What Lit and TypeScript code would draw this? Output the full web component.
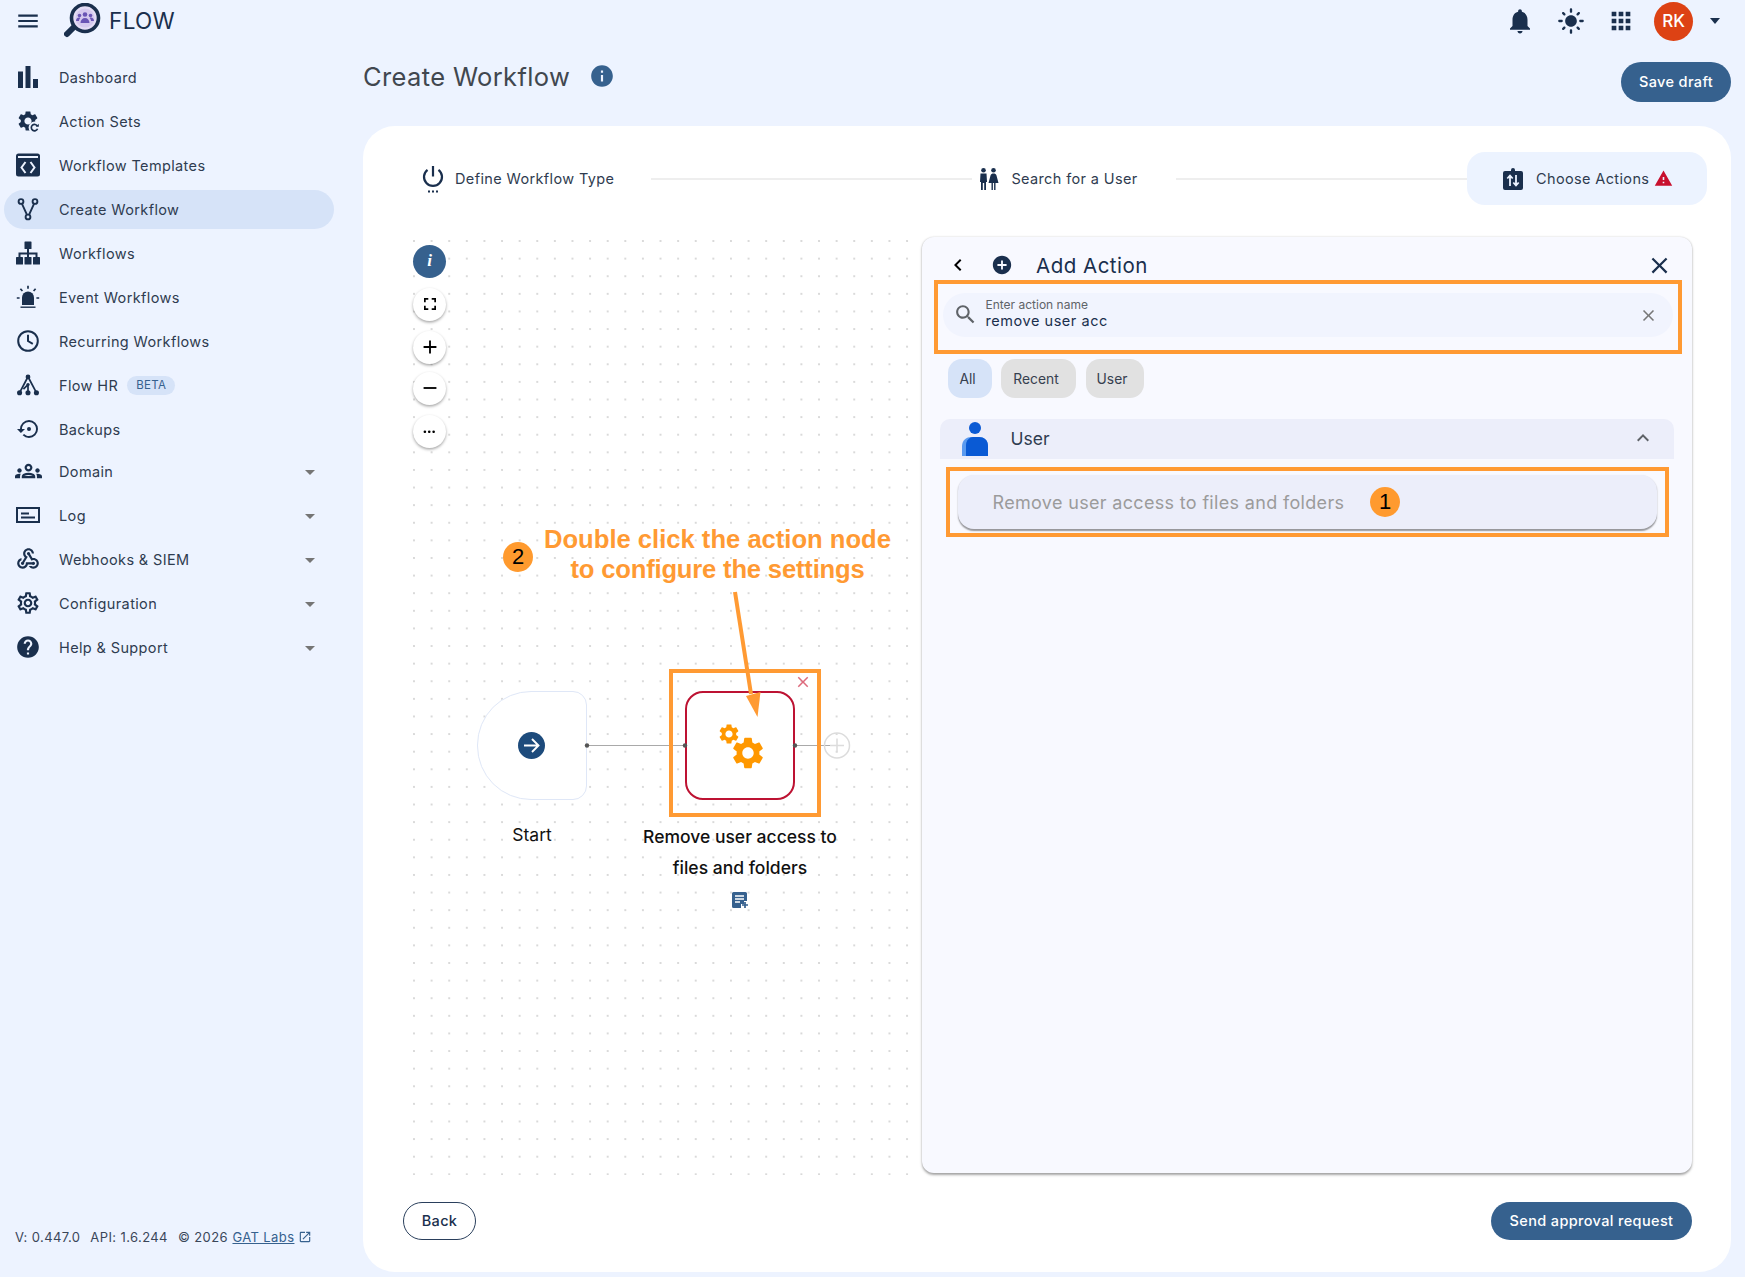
import { LitElement, html, css } from "lit";
import { customElement } from "lit/decorators.js";

const P = {
  menu: "M3 18h18v-2H3v2zm0-5h18v-2H3v2zm0-7v2h18V6H3z",
  gear: "M19.14 12.94c.04-.3.06-.61.06-.94 0-.32-.02-.64-.07-.94l2.03-1.58c.18-.14.23-.41.12-.61l-1.92-3.32c-.12-.22-.37-.29-.59-.22l-2.39.96c-.5-.38-1.03-.7-1.62-.94l-.36-2.54c-.04-.24-.24-.41-.48-.41h-3.84c-.24 0-.43.17-.47.41l-.36 2.54c-.59.24-1.13.57-1.62.94l-2.39-.96c-.22-.08-.47 0-.59.22L2.74 8.87c-.12.21-.08.47.12.61l2.03 1.58c-.05.3-.09.63-.09.94s.02.64.07.94l-2.03 1.58c-.18.14-.23.41-.12.61l1.92 3.32c.12.22.37.29.59.22l2.39-.96c.5.38 1.03.7 1.62.94l.36 2.54c.05.24.24.41.48.41h3.84c.24 0 .44-.17.47-.41l.36-2.54c.59-.24 1.13-.56 1.62-.94l2.39.96c.22.08.47 0 .59-.22l1.92-3.32c.12-.22.07-.47-.12-.61l-2.01-1.58zM12 15.6c-1.98 0-3.6-1.62-3.6-3.6s1.62-3.6 3.6-3.6 3.6 1.62 3.6 3.6-1.62 3.6-3.6 3.6z",
  restore: "M13 3a9 9 0 0 0-9 9H1l3.89 3.89.07.14L9 12H6c0-3.87 3.13-7 7-7s7 3.13 7 7-3.13 7-7 7c-1.93 0-3.68-.79-4.94-2.06l-1.42 1.42A8.954 8.954 0 0 0 13 21a9 9 0 0 0 0-18zm0 7a2 2 0 1 0 0 4 2 2 0 0 0 0-4z",
  groups: "M12 13.2c1.63 0 3.07.39 4.24.9 1.08.48 1.76 1.56 1.76 2.73V18H6v-1.17c0-1.18.68-2.26 1.76-2.73 1.17-.52 2.61-.9 4.24-.9zm0 1.8c-1.2 0-2.3.3-3.3.7-.4.2-.7.5-.7.3h8c0 .2-.3-.1-.7-.3-1-.4-2.1-.7-3.3-.7zM4 13c1.1 0 2-.9 2-2s-.9-2-2-2-2 .9-2 2 .9 2 2 2zm1.13 1.1c-.37-.06-.74-.1-1.13-.1-.99 0-1.93.21-2.78.58C.48 14.9 0 15.62 0 16.43V18h4.5v-1.61c0-.83.23-1.61.63-2.29zM20 13c1.1 0 2-.9 2-2s-.9-2-2-2-2 .9-2 2 .9 2 2 2zm4 3.43c0-.81-.48-1.53-1.22-1.85-.85-.37-1.79-.58-2.78-.58-.39 0-.76.04-1.13.1.4.68.63 1.46.63 2.29V18H24v-1.57zM12 5c1.93 0 3.5 1.57 3.5 3.5S13.93 12 12 12 8.5 10.43 8.5 8.5 10.07 5 12 5zm0 2c-.83 0-1.5.67-1.5 1.5S11.17 10 12 10s1.5-.67 1.5-1.5S12.83 7 12 7z",
  webhook: "M10 15h5.88c.27-.31.67-.5 1.12-.5.83 0 1.5.67 1.5 1.5s-.67 1.5-1.5 1.5c-.44 0-.84-.19-1.12-.5H11.9c-.46 2.28-2.48 4-4.9 4-2.76 0-5-2.24-5-5 0-2.42 1.72-4.44 4-4.9v2.07c-1.16.41-2 1.53-2 2.83 0 1.65 1.35 3 3 3s3-1.35 3-3v-1zm2.5-11c1.65 0 3 1.35 3 3h2c0-2.76-2.24-5-5-5s-5 2.24-5 5c0 1.43.6 2.71 1.55 3.62l-2.35 3.9c-.68.14-1.2.75-1.2 1.48 0 .83.67 1.5 1.5 1.5s1.5-.67 1.5-1.5c0-.16-.02-.31-.07-.45l3.38-5.63C10.49 9.61 9.5 8.42 9.5 7c0-1.65 1.35-3 3-3zm4.5 9c-.64 0-1.23.2-1.72.54l-3.05-5.07C11.53 8.35 11 7.74 11 7c0-.83.67-1.5 1.5-1.5S14 6.17 14 7c0 .15-.02.29-.06.43l2.19 3.65c.28-.05.57-.08.87-.08 2.76 0 5 2.24 5 5s-2.24 5-5 5c-1.85 0-3.47-1.01-4.33-2.5h2.67c.48.32 1.05.5 1.66.5 1.65 0 3-1.35 3-3s-1.35-3-3-3z",
  settings: "M19.43 12.98c.04-.32.07-.64.07-.98 0-.34-.03-.66-.07-.98l2.11-1.65c.19-.15.24-.42.12-.64l-2-3.46c-.09-.16-.26-.25-.44-.25-.06 0-.12.01-.17.03l-2.49 1c-.52-.4-1.08-.73-1.69-.98l-.38-2.65C14.46 2.18 14.25 2 14 2h-4c-.25 0-.46.18-.49.42l-.38 2.65c-.61.25-1.17.59-1.69.98l-2.49-1c-.06-.02-.12-.03-.18-.03-.17 0-.34.09-.43.25l-2 3.46c-.13.22-.07.49.12.64l2.11 1.65c-.04.32-.07.65-.07.98 0 .33.03.66.07.98l-2.11 1.65c-.19.15-.24.42-.12.64l2 3.46c.09.16.26.25.44.25.06 0 .12-.01.17-.03l2.49-1c.52.4 1.08.73 1.69.98l.38 2.65c.03.24.24.42.49.42h4c.25 0 .46-.18.49-.42l.38-2.65c.61-.25 1.17-.59 1.69-.98l2.49 1c.06.02.12.03.18.03.17 0 .34-.09.43-.25l2-3.46c.12-.22.07-.49-.12-.64l-2.11-1.65zm-1.98-1.71c.04.31.05.52.05.73 0 .21-.02.43-.05.73l-.14 1.13.89.7 1.08.84-.7 1.21-1.27-.51-1.04-.42-.9.68c-.43.32-.84.56-1.25.73l-1.06.43-.16 1.13-.2 1.35h-1.4l-.19-1.35-.16-1.13-1.06-.43c-.43-.18-.83-.41-1.23-.71l-.91-.7-1.06.43-1.27.51-.7-1.21 1.08-.84.89-.7-.14-1.13c-.03-.31-.05-.54-.05-.74s.02-.43.05-.73l.14-1.13-.89-.7-1.08-.84.7-1.21 1.27.51 1.04.42.9-.68c.43-.32.84-.56 1.25-.73l1.06-.43.16-1.13.2-1.35h1.39l.19 1.35.16 1.13 1.06.43c.43.18.83.41 1.23.71l.91.7 1.06-.43 1.27-.51.7 1.21-1.07.85-.89.7.14 1.13zM12 8c-2.21 0-4 1.79-4 4s1.79 4 4 4 4-1.79 4-4-1.79-4-4-4zm0 6c-1.1 0-2-.9-2-2s.9-2 2-2 2 .9 2 2-.9 2-2 2z",
  help: "M12 2C6.48 2 2 6.48 2 12s4.48 10 10 10 10-4.48 10-10S17.52 2 12 2zm1 17h-2v-2h2v2zm2.07-7.75l-.9.92C13.45 12.9 13 13.5 13 15h-2v-.5c0-1.1.45-2.1 1.17-2.83l1.24-1.26c.37-.36.59-.86.59-1.41 0-1.1-.9-2-2-2s-2 .9-2 2H8c0-2.21 1.79-4 4-4s4 1.79 4 4c0 .88-.36 1.68-.93 2.25z",
  bell: "M12 22c1.1 0 2-.9 2-2h-4c0 1.1.89 2 2 2zm6-6v-5c0-3.07-1.64-5.64-4.5-6.32V4c0-.83-.67-1.5-1.5-1.5s-1.5.67-1.5 1.5v.68C7.63 5.36 6 7.92 6 11v5l-2 2v1h16v-1l-2-2z",
  sun: "M12 7c-2.76 0-5 2.24-5 5s2.24 5 5 5 5-2.24 5-5-2.24-5-5-5zM2 13h2c.55 0 1-.45 1-1s-.45-1-1-1H2c-.55 0-1 .45-1 1s.45 1 1 1zm18 0h2c.55 0 1-.45 1-1s-.45-1-1-1h-2c-.55 0-1 .45-1 1s.45 1 1 1zM11 2v2c0 .55.45 1 1 1s1-.45 1-1V2c0-.55-.45-1-1-1s-1 .45-1 1zm0 18v2c0 .55.45 1 1 1s1-.45 1-1v-2c0-.55-.45-1-1-1s-1 .45-1 1zM5.99 4.58c-.39-.39-1.03-.39-1.41 0-.39.39-.39 1.03 0 1.41l1.06 1.06c.39.39 1.03.39 1.41 0s.39-1.03 0-1.41L5.99 4.58zm12.37 12.37c-.39-.39-1.03-.39-1.41 0-.39.39-.39 1.03 0 1.41l1.06 1.06c.39.39 1.03.39 1.41 0 .39-.39.39-1.03 0-1.41l-1.06-1.06zm1.06-10.96c.39-.39.39-1.03 0-1.41-.39-.39-1.03-.39-1.41 0l-1.06 1.06c-.39.39-.39 1.03 0 1.41s1.03.39 1.41 0l1.06-1.06zM7.05 18.36c.39-.39.39-1.03 0-1.41-.39-.39-1.03-.39-1.41 0l-1.06 1.06c-.39.39-.39 1.03 0 1.41s1.03.39 1.41 0l1.06-1.06z",
  apps: "M4 8h4V4H4v4zm6 12h4v-4h-4v4zm-6 0h4v-4H4v4zm0-6h4v-4H4v4zm6 0h4v-4h-4v4zm6-10v4h4V4h-4zm-6 4h4V4h-4v4zm6 6h4v-4h-4v4zm0 6h4v-4h-4v4z",
  search: "M15.5 14h-.79l-.28-.27C15.41 12.59 16 11.11 16 9.5 16 5.91 13.09 3 9.5 3S3 5.91 3 9.5 5.91 16 9.5 16c1.61 0 3.09-.59 4.23-1.57l.27.28v.79l5 4.99L20.49 19l-4.99-5zm-6 0C7.01 14 5 11.99 5 9.5S7.01 5 9.5 5 14 7.01 14 9.5 11.99 14 9.5 14z",
  close: "M19 6.41L17.59 5 12 10.59 6.41 5 5 6.41 10.59 12 5 17.59 6.41 19 12 13.41 17.59 19 19 17.59 13.41 12z",
  back: "M15.41 7.41L14 6l-6 6 6 6 1.41-1.41L10.83 12z",
  less: "M12 8l-6 6 1.41 1.41L12 10.83l4.59 4.58L18 14z",
  add: "M12 2C6.48 2 2 6.48 2 12s4.48 10 10 10 10-4.48 10-10S17.52 2 12 2zm5 11h-4v4h-2v-4H7v-2h4V7h2v4h4v2z",
  warn: "M1 21h22L12 2 1 21zm12-3h-2v-2h2v2zm0-4h-2v-4h2v4z",
  info: "M12 2C6.48 2 2 6.48 2 12s4.48 10 10 10 10-4.48 10-10S17.52 2 12 2zm1 15h-2v-6h2v6zm0-8h-2V7h2v2z",
  plus: "M19 13h-6v6h-2v-6H5v-2h6V5h2v6h6v2z",
  minus: "M19 13H5v-2h14v2z",
  ext: "M19 19H5V5h7V3H5c-1.11 0-2 .9-2 2v14c0 1.1.89 2 2 2h14c1.1 0 2-.9 2-2v-7h-2v7zM14 3v2h3.59l-9.83 9.83 1.41 1.41L19 6.41V10h2V3h-7z",
};

const mi = (d: string, cls = "") => html`<svg class="${cls}" viewBox="0 0 24 24" fill="currentColor"><path d="${d}"></path></svg>`;

const NAV: any[] = [
  {
    label: "Dashboard",
    icon: html`<svg class="bars" viewBox="0 0 20 22" fill="currentColor"><rect x="0" y="5.500" width="5" height="16.500"></rect><rect x="7.500" y="0" width="5" height="22"></rect><rect x="15" y="13" width="5" height="9"></rect></svg>`,
  },
  {
    label: "Action Sets",
    icon: html`<svg class="nav-ic" viewBox="0 0 24 24" fill="currentColor"><path d="${P.gear}"></path><circle cx="18.6" cy="18.6" r="6" fill="#edf3ff"></circle><path d="M21.4 17.2a3.2 3.2 0 1 0 .1 2.6" fill="none" stroke="currentColor" stroke-width="1.7"></path><path d="M19.8 17.8h3v-3z"></path></svg>`,
  },
  {
    label: "Workflow Templates",
    icon: html`<svg class="nav-ic" viewBox="0 0 24 23" fill="currentColor"><rect width="24" height="23" rx="2.5"></rect><rect x="2" y="2.5" width="20" height="2" fill="#edf3ff"></rect><path d="M9.5 8.5 5.5 14l4 5.5M14.5 8.5l4 5.5-4 5.5" fill="none" stroke="#edf3ff" stroke-width="2"></path></svg>`,
  },
  {
    label: "Create Workflow",
    active: true,
    icon: html`<svg class="nav-ic" viewBox="0 0 24 24" fill="none" stroke="currentColor" stroke-width="1.9"><circle cx="5" cy="4.5" r="2.4"></circle><circle cx="19" cy="4.5" r="2.4"></circle><circle cx="12" cy="20" r="2.4"></circle><path d="M6 6.8 11 17.8M18 6.8 13 17.8"></path></svg>`,
  },
  {
    label: "Workflows",
    icon: html`<svg class="nav-ic" viewBox="0 0 24 24" fill="currentColor"><rect x="8.5" y="0.5" width="7" height="7.5" rx=".6"></rect><rect x="0" y="16" width="7" height="7.5" rx=".6"></rect><rect x="8.500" y="16" width="7" height="7.5" rx=".6"></rect><rect x="17" y="16" width="7" height="7.5" rx=".6"></rect><path d="M12 7v10M3.500 17v-4.500h17V17" fill="none" stroke="currentColor" stroke-width="2"></path></svg>`,
  },
  {
    label: "Event Workflows",
    icon: html`<svg class="nav-ic" viewBox="0 0 24 24" fill="currentColor"><path d="M6 20v-7.500a6 6 0 0 1 12 0V20z"></path><rect x="4.500" y="21.500" width="15" height="1.400"></rect><path d="M12 .8v3M4.400 3.800l2 2.200M19.600 3.800l-2 2.200M.8 13h2.800M20.400 13h2.800" stroke="currentColor" stroke-width="1.700" fill="none"></path></svg>`,
  },
  {
    label: "Recurring Workflows",
    icon: html`<svg class="nav-ic" viewBox="0 0 24 24" fill="none" stroke="currentColor" stroke-width="2"><circle cx="12" cy="12" r="9.800"></circle><path d="M12 5.800V12l4.800 2.800"></path></svg>`,
  },
  {
    label: "Flow HR",
    badge: "BETA",
    icon: html`<svg class="nav-ic sm22" viewBox="0 0 24 24" fill="currentColor"><circle cx="12" cy="3.200" r="2.600"></circle><circle cx="2.800" cy="20.500" r="2.800"></circle><circle cx="12" cy="20.500" r="2.800"></circle><circle cx="21.200" cy="20.500" r="2.800"></circle><circle cx="12" cy="11.500" r="1.800"></circle><path d="M12 3 3 20M12 3l9 17M12 11v9M12 11.500l-5 5" fill="none" stroke="currentColor" stroke-width="1.900"></path></svg>`,
  },
  { label: "Backups", icon: mi(P.restore, "nav-ic") },
  { label: "Domain", caret: true, first: true, icon: mi(P.groups, "nav-ic wide") },
  {
    label: "Log",
    caret: true,
    icon: html`<svg class="nav-ic" viewBox="0 0 24 16" fill="none" stroke="currentColor"><rect x="1" y="1" width="22" height="14" stroke-width="2"></rect><path d="M5 6.500h8M5 10.500h14" stroke-width="1.800"></path></svg>`,
  },
  { label: "Webhooks & SIEM", caret: true, icon: mi(P.webhook, "nav-ic lg") },
  { label: "Configuration", caret: true, icon: mi(P.settings, "nav-ic lg") },
  { label: "Help & Support", caret: true, icon: mi(P.help, "nav-ic lg") },
];

@customElement("app-root")
export class AppRoot extends LitElement {
  static styles = css`
    :host {
      display: grid;
      grid-template-columns: 363px 1fr;
      width: 1745px;
      height: 1277px;
      overflow: hidden;
      background: #edf3ff;
      font-family: Inter, "Noto Sans", sans-serif;
      color: #1a2f4d;
    }
    svg { display: block; flex: none; }
    .side { display: flex; flex-direction: column; height: 1277px; box-sizing: border-box; }
    .brand { display: flex; align-items: center; height: 42px; padding-left: 15px; }
    .menu-ic { width: 26px; height: 26px; }
    .logo { width: 37px; height: 37px; margin-left: 23px; }
    .flow { margin-left: 8px; font-size: 22.5px; letter-spacing: 0.35px; color: #1a2f4d; line-height: 42px; }
    .nav { display: flex; flex-direction: column; padding: 15.5px 29px 0 4px; }
    .item {
      display: flex; align-items: center; height: 39px; margin-bottom: 5px; padding-left: 9px;
      border-radius: 20px; font-size: 14.5px; letter-spacing: 0.37px; color: #2f3c50;
    }
    .item.active { background: #d6e3f8; }
    .item.first { margin-top: -2px; }
    .ic-box { width: 30px; height: 30px; display: flex; align-items: center; justify-content: center; margin-right: 16px; color: #1a2f4d; }
    .nav-ic { width: 24px; height: 24px; }
    .bars { width: 20px; height: 22px; }
    .nav-ic.wide { width: 27px; height: 27px; }
    .nav-ic.lg { width: 26px; height: 26px; }
    .nav-ic.sm22 { width: 22px; height: 22px; }
    .beta {
      margin-left: 9px; padding: 0 9px; height: 19px; line-height: 19px; border-radius: 10px;
      background: #d6e3f8; color: #36618e; font-size: 11.5px; letter-spacing: 0.35px;
    }
    .caret { margin: 2px 19px 0 auto; width: 0; height: 0; border: 5px solid transparent; border-top: 5.5px solid #757575; border-bottom: 0; }
    .foot {
      margin-top: auto; padding: 0 0 32px 15px; display: flex; align-items: center;
      font-size: 13px; letter-spacing: 0.4px; color: #3a4659; white-space: nowrap;
    }
    .foot span { margin-right: 10px; }
    .foot a { color: #36618e; text-decoration: underline; margin-left: -5.500px; }
    .ext { width: 14px; height: 14px; margin-left: 4px; color: #36618e; }

    .main { display: flex; flex-direction: column; padding-right: 14px; min-width: 0; }
    .top { display: flex; align-items: center; justify-content: flex-end; height: 42px; padding-right: 11px; gap: 22px; }
    .top svg { width: 30px; height: 30px; color: #1a2f4d; }
    .top svg.sm { width: 28px; height: 28px; }
    .avatar {
      width: 39px; height: 39px; border-radius: 50%; background: #dd4214; color: #fff; display: flex;
      align-items: center; justify-content: center; font-size: 17px; font-weight: 500; margin-left: -3px;
    }
    .tcaret { width: 0; height: 0; border: 5.5px solid transparent; border-top: 6px solid #1a2f4d; border-bottom: 0; margin-left: -5px; }
    .title-row { display: flex; align-items: flex-start; padding-top: 20px; height: 84px; box-sizing: border-box; }
    h1 { margin: 0; font-size: 25.5px; line-height: 29px; font-weight: 400; color: #41474f; letter-spacing: 0.36px; }
    .t-info { width: 26px; height: 26px; margin: 1px 0 0 19px; color: #36618e; }
    .btn {
      display: inline-flex; align-items: center; justify-content: center; border-radius: 21px; background: #36618e; color: #fff;
      font: 500 14.5px Inter, sans-serif; letter-spacing: 0.36px; border: 0; height: 39px; padding: 0;
    }
    .save { margin-left: auto; width: 110px; height: 40px; padding-bottom: 2px; }
    .card {
      flex: 1; background: #fff; border-radius: 32px; margin-bottom: 5px; display: flex; flex-direction: column; padding-top: 26px; min-height: 0;
    }
    .steps { display: flex; align-items: center; height: 53px; padding-left: 58px; padding-right: 24px; font-size: 14.5px; letter-spacing: 0.37px; color: #2f3c50; }
    .step-pow { width: 24px; height: 28px; color: #1a2f4d; margin-right: 10px; }
    .line { height: 2px; background: #eee; }
    .l1 { width: 321px; margin: 0 7px 0 37px; }
    .l2 { flex: 1; margin-left: 38px; }
    .man { width: 20px; height: 22px; color: #1a2f4d; margin-right: 12px; }
    .pill { width: 240px; height: 53px; background: #ecf3ff; border-radius: 18px; display: flex; align-items: center; padding-left: 36px; box-sizing: border-box; }
    .acts { width: 20px; height: 22px; margin-right: 13px; color: #1a2f4d; }
    .warn { width: 19px; height: 19px; margin-left: 5px; color: #c8102e; }
    .body { flex: 1; display: flex; margin-top: 32px; padding-left: 42px; padding-right: 39px; min-height: 0; }
    .canvas {
      position: relative; flex: 1; min-width: 0; margin-bottom: -2px;
      background-image: radial-gradient(circle at center, #c9c9c9 0.6px, transparent 0.9px);
      background-size: 17.62px 17.62px;
      background-position: 0.2px -4.8px;
    }
    .panel {
      width: 770.5px; flex: none; background: #f8f9ff; border-radius: 12px; padding-top: 15px; box-sizing: border-box;
      box-shadow: 0 1.5px 2.5px rgba(0,0,0,.35), 0 0 2px rgba(0,0,0,.08); position: relative;
    }
    .p-head { display: flex; align-items: center; height: 26px; padding: 0 19px 0 24px; }
    .p-head svg { width: 24px; height: 24px; color: #000; }
    .p-head svg.p-add { width: 22px; height: 22px; margin-left: 21px; color: #1a2f4d; }
    .p-title { margin-left: 23.5px; font-size: 20.5px; letter-spacing: 0.5px; color: #1a2f4d; }
    .p-head svg.p-x { margin-left: auto; width: 27px; height: 27px; color: #1a2f4d; }
    .box1 { margin: 2px 10.500px 0 12px; height: 74px; border: 4px solid #ff9a33; box-sizing: border-box; padding: 9px 5px 0; }
    .field { height: 44px; border-radius: 22px; background: #f1f4fe; display: flex; align-items: center; padding: 0 15px 0 10px; }
    .field .s { width: 25px; height: 25px; color: #5f6368; margin: -2px 8px 0 0; }
    .f-txt { display: flex; flex-direction: column; margin-top: -4px; }
    .f-label { font-size: 12px; line-height: 15px; color: #5f6368; }
    .f-val { font-size: 14.5px; line-height: 17px; letter-spacing: 0.55px; color: #1a2f4d; }
    .field .x { width: 19px; height: 19px; margin-left: auto; color: #777; }
    .chips { display: flex; gap: 9.5px; margin: 5px 0 0 26px; }
    .chip { height: 39px; border-radius: 14px; background: #e1e1e1; display: flex; align-items: center; justify-content: center; font-size: 13.8px; color: #36404f; padding-right: 5px; box-sizing: border-box; }
    .chip.a { width: 44px; background: #d6e3f8; padding-right: 4px; }
    .chip.b { width: 75px; }
    .chip.c { width: 58px; }
    .acc { margin: 21px 18.500px 0 18px; height: 40px; background: #eceefa; border-radius: 10px 10px 0 0; display: flex; align-items: center; padding-left: 21px; overflow: hidden; }
    .person { width: 28px; height: 36px; margin: -2px 22px 0 0; }
    .acc-t { font-size: 17.5px; color: #2f3c50; margin-top: -2px; }
    .acc svg.u { margin: -2px 19px 0 auto; width: 24px; height: 24px; color: #5f6368; }
    .box2 { margin: 8px 23.5px 0 24px; height: 70px; border: 4px solid #ff9a33; box-sizing: border-box; padding: 4px 8px 4px 8px; }
    .row { height: 54px; background: #eceefa; border-radius: 16px; box-shadow: 0 1.5px 1.5px rgba(0,0,0,.4); display: flex; align-items: center; padding-left: 35px; font-size: 18px; letter-spacing: 0.33px; color: #9b9b9b; }
    .num { width: 30px; height: 30px; border-radius: 50%; background: #ff9a2e; color: #000; display: flex; align-items: center; justify-content: center; font: 22px "Liberation Sans", sans-serif; flex: none; }
    .row .num { margin-left: 26px; }
    .bottom { display: flex; justify-content: space-between; padding: 29px 39px 32px 40px; }
    .back { width: 73px; height: 38px; background: #fff; color: #1a2f4d; border: 1.5px solid #2a3f5c; box-sizing: border-box; }
    .send { width: 201px; height: 38.5px; }

    .tool { position: absolute; left: 8px; width: 33px; height: 33px; border-radius: 50%; background: #fff; box-shadow: 0 1.5px 3px rgba(0,0,0,.35); display: flex; align-items: center; justify-content: center; color: #000; }
    .tool svg { width: 22px; height: 22px; }
    .t1 { top: 7.5px; background: #36618e; color: #fff; box-shadow: none; font: italic bold 17px "Liberation Serif", serif; }
    .t2 { top: 50.5px; }
    .t3 { top: 93.5px; }
    .t4 { top: 134.5px; }
    .t5 { top: 178px; }
    .tool svg.corners { width: 12px; height: 12px; }
    .tool svg.dots { width: 12.5px; height: 3.5px; }
    .overlay { position: absolute; left: 0; top: 0; width: 517px; height: 937px; pointer-events: none; }
    .start { position: absolute; left: 72px; top: 453.5px; width: 110px; height: 109px; box-sizing: border-box; border: 1.5px solid #dfe7f7; border-radius: 54px 14px 14px 54px / 54px 14px 14px 54px; background: #fff; }
    .go { position: absolute; left: 113px; top: 495px; width: 27px; height: 27px; border-radius: 50%; background: #1d4b7c; }
    .node { position: absolute; left: 280px; top: 453.5px; width: 110px; height: 109px; box-sizing: border-box; border: 2px solid #bd1232; border-radius: 18px; background: #fff; }
    .hbox { position: absolute; left: 264px; top: 432px; width: 152px; height: 148px; box-sizing: border-box; border: 4px solid #ff9a33; }
    .hx { position: absolute; left: 389px; top: 436px; width: 18px; height: 18px; color: #dd6a7c; }
    .g1 { position: absolute; left: 312px; top: 485px; width: 24px; height: 24px; color: #ff9800; }
    .g2 { position: absolute; left: 323.5px; top: 497px; width: 38px; height: 38px; color: #ff9800; }
    .cap { position: absolute; text-align: center; color: #111; line-height: 31px; white-space: nowrap; }
    .c-start { left: 92px; top: 581.5px; width: 70px; font-size: 17.5px; }
    .c-node { left: 225px; top: 583.5px; width: 220px; font-size: 17.5px; font-weight: 500; }
    .nadd { position: absolute; left: 326px; top: 654px; width: 18px; height: 18px; color: #36618e; }
    .note { position: absolute; left: 126.5px; top: 287px; width: 372px; text-align: center; font: bold 25.6px/30px "Liberation Sans", sans-serif; color: #ff9a33; white-space: nowrap; }
    .note-b { letter-spacing: -0.18px; }
    .n2 { position: absolute; left: 98px; top: 305px; }
  `;

  render() {
    return html`
      <div class="side">
        <div class="brand">
          ${mi(P.menu, "menu-ic")}
          <svg class="logo" viewBox="0 0 37 37">
            <path d="M10 24 3 31" stroke="#1a2f4d" stroke-width="6" stroke-linecap="round" fill="none"></path>
            <circle cx="21" cy="15" r="13.5" fill="#e4ddf5" stroke="#1a2f4d" stroke-width="3.600"></circle>
            <circle cx="21" cy="15" r="9.500" fill="#d5c9ef"></circle>
            <g fill="#6a55b5">
              <circle cx="21" cy="11.500" r="2.300"></circle><circle cx="15.500" cy="12.500" r="1.800"></circle><circle cx="26.500" cy="12.500" r="1.800"></circle>
              <path d="M16.500 20c0-3 2-5 4.500-5s4.500 2 4.500 5zM12 18c0-2 1.400-3.500 3-3.500.5 0 1 .1 1.400.4-1 1-1.400 2-1.400 3.100zM30 18c0-2-1.400-3.500-3-3.500-.5 0-1 .1-1.400.4 1 1 1.400 2 1.400 3.100z"></path>
            </g>
          </svg>
          <span class="flow">FLOW</span>
        </div>
        <div class="nav">
          ${NAV.map(
            (n) => html`<div class="item ${n.active ? "active" : ""} ${n.first ? "first" : ""}">
              <span class="ic-box">${n.icon}</span>
              <span>${n.label}</span>
              ${n.badge ? html`<span class="beta">${n.badge}</span>` : ""}
              ${n.caret ? html`<span class="caret"></span>` : ""}
            </div>`
          )}
        </div>
        <div class="foot">
          <span>V: 0.447.0</span><span>API: 1.6.244</span><span>© 2026</span><a>GAT Labs</a>${mi(P.ext, "ext")}
        </div>
      </div>
      <div class="main">
        <div class="top">
          ${mi(P.bell)}${mi(P.sun, "sm")}${mi(P.apps, "sm")}
          <div class="avatar">RK</div>
          <div class="tcaret"></div>
        </div>
        <div class="title-row">
          <h1>Create Workflow</h1>
          ${mi(P.info, "t-info")}
          <button class="btn save">Save draft</button>
        </div>
        <div class="card">
          <div class="steps">
            <svg class="step-pow" viewBox="0 0 24 28" fill="none" stroke="currentColor" stroke-width="2.200">
              <path d="M12 1v10.500M6.500 4.800a9 9 0 1 0 11 0"></path>
              <path d="M7 26.500h2M11 26.500h2M15 26.500h2" stroke-width="1.800"></path>
            </svg>
            <span>Define Workflow Type</span>
            <div class="line l1"></div>
            <svg class="man" viewBox="0 0 20 22" fill="currentColor">
              <circle cx="4.500" cy="2.300" r="2.300"></circle><circle cx="14.500" cy="2.300" r="2.300"></circle>
              <path d="M1.500 5.500h6l.5 8.500H7v8H5.200v-7h-1.400v7H2v-8H1z"></path>
              <path d="M14.500 5.500c1.500 0 2.500.5 3 2l2 7.500h-3V22h-1.400v-7h-1.200v7h-1.400v-7h-3l2-7.500c.5-1.500 1.500-2 3-2z"></path>
            </svg>
            <span>Search for a User</span>
            <div class="line l2"></div>
            <div class="pill">
              <svg class="acts" viewBox="0 0 20 22" fill="currentColor">
                <path d="M2 3h6V2a2 2 0 0 1 4 0v1h6a2 2 0 0 1 2 2v15a2 2 0 0 1-2 2H2a2 2 0 0 1-2-2V5a2 2 0 0 1 2-2z"></path>
                <path d="M7 18V8M4.300 10.500 7 7.500l2.700 3M13 7v10M10.300 14.500 13 17.500l2.700-3" fill="none" stroke="#ecf3ff" stroke-width="1.800"></path>
              </svg>
              <span>Choose Actions</span>
              ${mi(P.warn, "warn")}
            </div>
          </div>
          <div class="body">
            <div class="canvas">
              <div class="tool t1">i</div>
              <div class="tool t2"><svg class="corners" viewBox="0 0 14 14" fill="none" stroke="#000" stroke-width="2"><path d="M1 5V1h4M9 1h4v4M13 9v4H9M5 13H1V9"></path></svg></div>
              <div class="tool t3">${mi(P.plus)}</div>
              <div class="tool t4">${mi(P.minus)}</div>
              <div class="tool t5"><svg class="dots" viewBox="0 0 14 4" fill="#000"><circle cx="2" cy="2" r="1.500"></circle><circle cx="7" cy="2" r="1.500"></circle><circle cx="12" cy="2" r="1.500"></circle></svg></div>

              <svg class="overlay" viewBox="405 237 517 937">
                <path d="M587 745.500H685M795 745.500H837" stroke="#a9a9a9" stroke-width="1.200"></path>
              </svg>
              <div class="start"></div>
              <svg class="go" viewBox="0 0 27 27" fill="none" stroke="#fff" stroke-width="1.900"><path d="M6 13.500h14.500M14 7l6.500 6.500L14 20"></path></svg>
              <div class="node"></div>
              ${mi(P.gear, "g1")}${mi(P.gear, "g2")}
              ${mi(P.close, "hx")}
              <div class="hbox"></div>
              <svg class="overlay" viewBox="405 237 517 937">
                <g fill="#555"><circle cx="587" cy="745.500" r="2.200"></circle><circle cx="685" cy="745.500" r="2.200"></circle><circle cx="795" cy="745.500" r="2.200"></circle></g>
                <circle cx="837" cy="745.500" r="12.500" fill="none" stroke="#dcdcdc" stroke-width="1.500"></circle>
                <path d="M830 745.500h14M837 738.500v14" stroke="#dcdcdc" stroke-width="1.500"></path>
                <path d="M735 592 751 694" stroke="#ff9a33" stroke-width="4" fill="none"></path>
                <path d="M746 696 760.500 692 757.500 717z" fill="#ff9a33"></path>
              </svg>
              <div class="cap c-start">Start</div>
              <div class="cap c-node">Remove user access to<br />files and folders</div>
              <svg class="nadd" viewBox="0 0 18 18" fill="currentColor">
                <path d="M2.500 1h12A1.500 1.500 0 0 1 16 2.500V10h-3v3h-3v4H2.500A1.500 1.500 0 0 1 1 15.500v-13A1.500 1.500 0 0 1 2.500 1z"></path>
                <path d="M4 5h9M4 8h9M4 11h5" stroke="#fff" stroke-width="1.400"></path>
                <path d="M14 11v6M11 14h6" stroke="currentColor" stroke-width="1.700"></path>
              </svg>
              <div class="note">Double click the action node<br /><span class="note-b">to configure the settings</span></div>
              <div class="num n2">2</div>
            </div>
            <div class="panel">
              <div class="p-head">
                ${mi(P.back)}${mi(P.add, "p-add")}
                <span class="p-title">Add Action</span>
                ${mi(P.close, "p-x")}
              </div>
              <div class="box1">
                <div class="field">
                  ${mi(P.search, "s")}
                  <div class="f-txt"><span class="f-label">Enter action name</span><span class="f-val">remove user acc</span></div>
                  ${mi(P.close, "x")}
                </div>
              </div>
              <div class="chips">
                <div class="chip a">All</div><div class="chip b">Recent</div><div class="chip c">User</div>
              </div>
              <div class="acc">
                <svg class="person" viewBox="0 0 28 36">
                  <circle cx="14" cy="8" r="6" fill="#0a5ad4"></circle>
                  <path d="M1 36V26c0-6 5-9 9-9h8c4 0 9 3 9 9v10z" fill="#5b9bf0"></path>
                  <path d="M5 36V25c0-5 4-8 7-8h6c5 0 9 3 9 9v10z" fill="#0a5ad4"></path>
                </svg>
                <span class="acc-t">User</span>
                ${mi(P.less, "u")}
              </div>
              <div class="box2">
                <div class="row">Remove user access to files and folders<span class="num">1</span></div>
              </div>
            </div>
          </div>
          <div class="bottom">
            <button class="btn back">Back</button>
            <button class="btn send">Send approval request</button>
          </div>
        </div>
      </div>
    `;
  }
}
